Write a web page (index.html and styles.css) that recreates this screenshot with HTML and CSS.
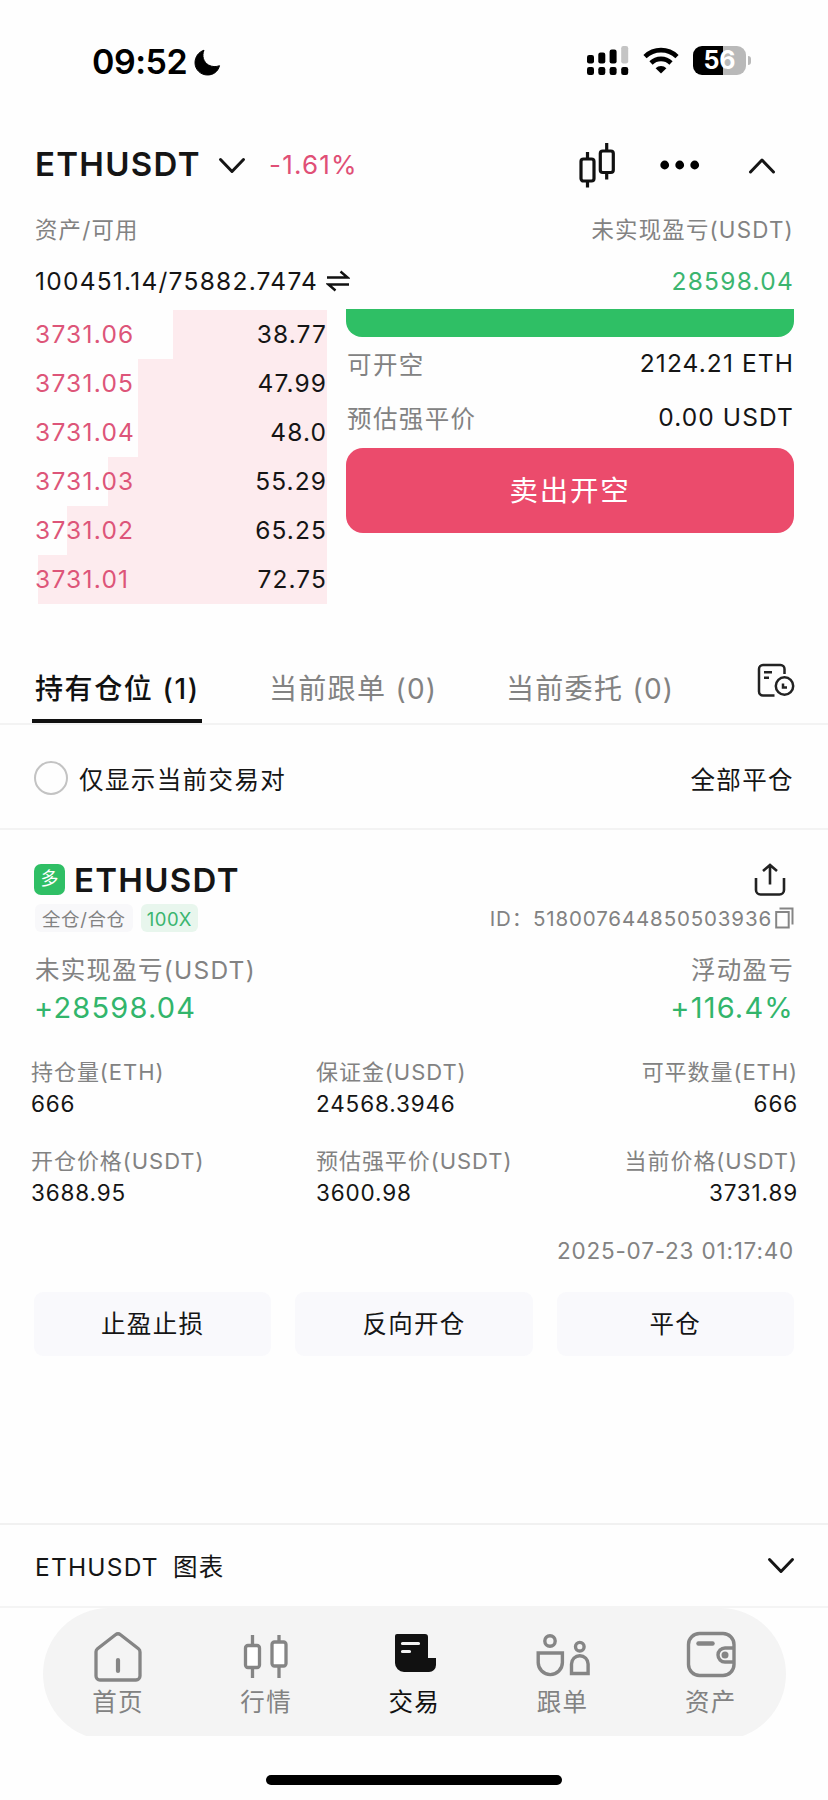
FILE: index.html
```html
<!DOCTYPE html>
<html lang="zh-CN">
<head>
<meta charset="utf-8">
<title>ETHUSDT</title>
<link rel="stylesheet" href="styles.css">
</head>
<body>
<div class="phone">
  <div class="status">
    <span class="clock">09:52</span>
    <svg class="moon" width="27" height="27" viewBox="0 0 27 27"><path d="M10 1.2C7.5 7 9.5 13 14.5 16c3.600 2 7.600 2 11 .7C24 22.500 19.500 26 13.500 26 6.500 26 1 20.500 1 13.800 1 8 4.500 3 10 1.200z" fill="#000" stroke="#000" stroke-linejoin="round"/></svg>
    <span class="grow"></span>
    <svg class="signal" width="42" height="30" viewBox="0 0 42 30"><g fill="#000"><rect x="0" y="9" width="7" height="8.500" rx="2.200"/><rect x="11.300" y="6.500" width="7" height="11" rx="2.200"/><rect x="22.600" y="3.500" width="7" height="14" rx="2.200"/><rect x="0" y="21" width="7" height="8" rx="2.200"/><rect x="11.300" y="21" width="7" height="8" rx="2.200"/><rect x="22.600" y="21" width="7" height="8" rx="2.200"/><rect x="34.200" y="21" width="7" height="8" rx="2.200"/></g><rect x="34.200" y="0" width="7" height="17.500" rx="2.200" fill="#c4c4c4"/></svg>
    <svg class="wifi" width="36" height="27" viewBox="0 0 36 27"><g fill="none" stroke="#000" stroke-width="4.600"><path d="M2 9.600a23 23 0 0 1 32 0"/><path d="M8 16a14.300 14.300 0 0 1 20 0"/></g><path d="M18 26.500l-5.400-5.300a7.600 7.600 0 0 1 10.800 0z"/></svg>
    <div class="battery"><span>56</span></div>
    <i class="nub"></i>
  </div>

  <div class="header">
    <span class="pair">ETHUSDT</span>
    <svg class="caret" width="28" height="18" viewBox="0 0 28 18"><path d="M2.500 2.500L14 14.500 25.500 2.500" class="line-b"/></svg>
    <span class="change">-1.61%</span>
    <span class="grow"></span>
    <svg class="candles" width="36" height="46" viewBox="0 0 36 46"><g fill="none" stroke="#111" stroke-width="3.200"><rect x="2" y="17" width="13" height="22" rx="2.500"/><rect x="21.300" y="9" width="13" height="21.500" rx="2.500"/><path d="M8.500 10v7M8.500 39v6.500M27.700 1v8M27.700 30.500v7"/></g></svg>
    <svg class="dots" width="40" height="10" viewBox="0 0 40 10"><circle cx="4.700" cy="5" r="4.400"/><circle cx="19.700" cy="5" r="4.400"/><circle cx="34.700" cy="5" r="4.400"/></svg>
    <svg class="up" width="28" height="18" viewBox="0 0 28 18"><path d="M2.500 15L14 3 25.500 15" class="line-b"/></svg>
  </div>

  <div class="row labels"><span>资产/可用</span><span>未实现盈亏(USDT)</span></div>
  <div class="row balances">
    <span class="assets">100451.14/75882.7474</span>
    <svg class="swap" width="24" height="22" viewBox="0 0 24 22"><path d="M1 7.500h20.500L14.500 1.500M23 14.500H2.500l7 6" fill="none" stroke="#111" stroke-width="2.400"/></svg>
    <span class="grow"></span>
    <span class="green">28598.04</span>
  </div>

  <div class="trade">
    <div class="book">
      <div class="level"><i style="width:154.500px"></i><b>3731.06</b><span>38.77</span></div>
      <div class="level"><i style="width:189.500px"></i><b>3731.05</b><span>47.99</span></div>
      <div class="level"><i style="width:189.500px"></i><b>3731.04</b><span>48.0</span></div>
      <div class="level"><i style="width:219.500px"></i><b>3731.03</b><span>55.29</span></div>
      <div class="level"><i style="width:260.500px"></i><b>3731.02</b><span>65.25</span></div>
      <div class="level"><i style="width:289.500px"></i><b>3731.01</b><span>72.75</span></div>
    </div>
    <div class="order">
      <div class="buy"></div>
      <div class="info"><span>可开空</span><b>2124.21 ETH</b></div>
      <div class="info"><span>预估强平价</span><b>0.00 USDT</b></div>
      <div class="sell">卖出开空</div>
    </div>
  </div>

  <div class="tabs">
    <span class="tab active">持有仓位 (1)</span>
    <span class="tab second">当前跟单 (0)</span>
    <span class="tab third">当前委托 (0)</span>
    <span class="grow"></span>
    <svg class="history" width="38" height="36" viewBox="0 0 38 36"><g fill="none" stroke="#222" stroke-width="2.500"><path d="M17.500 32.500H6a4 4 0 0 1-4-4V6a4 4 0 0 1 4-4h17.500a4 4 0 0 1 4 4v5"/><circle cx="27.500" cy="23" r="8.700"/><path d="M7 9.200h8M7 14.800h5M26 20.500v4h4"/></g></svg>
  </div>

  <div class="filter"><i class="radio"></i><span class="only">仅显示当前交易对</span><span class="grow"></span><span class="closeall">全部平仓</span></div>

  <div class="card">
    <div class="card-head">
      <span class="side">多</span><span class="name">ETHUSDT</span><span class="grow"></span>
      <svg class="share" width="32" height="34" viewBox="0 0 32 34"><path d="M2 15v12a4.500 4.500 0 0 0 4.500 4.500h19A4.500 4.500 0 0 0 30 27V15M16 21.500V2.500M9 8l7-6 7 6" fill="none" stroke="#222" stroke-width="2.600"/></svg>
    </div>
    <div class="meta">
      <span class="tag">全仓/合仓</span><span class="tag lever">100X</span><span class="grow"></span>
      <span class="id">ID：518007644850503936</span>
      <svg class="copy" width="19" height="22" viewBox="0 0 19 22"><g fill="none" stroke="#858585" stroke-width="2"><rect x="1.200" y="5" width="12.500" height="15.500"/><path d="M4.500 1.500h13v16"/></g></svg>
    </div>
    <div class="pnl-label"><span>未实现盈亏(USDT)</span><span>浮动盈亏</span></div>
    <div class="pnl"><span>+28598.04</span><span>+116.4%</span></div>
    <div class="stats">
      <div><span>持仓量(ETH)</span><b>666</b></div>
      <div><span>保证金(USDT)</span><b>24568.3946</b></div>
      <div><span>可平数量(ETH)</span><b>666</b></div>
      <div><span>开仓价格(USDT)</span><b>3688.95</b></div>
      <div><span>预估强平价(USDT)</span><b>3600.98</b></div>
      <div><span>当前价格(USDT)</span><b>3731.89</b></div>
    </div>
    <div class="date">2025-07-23 01:17:40</div>
    <div class="actions"><span>止盈止损</span><span>反向开仓</span><span>平仓</span></div>
  </div>

  <div class="chart"><span class="chart-name">ETHUSDT</span><span>图表</span><span class="grow"></span>
    <svg class="fold" width="28" height="18" viewBox="0 0 28 18"><path d="M2.500 2.500L14 14.500 25.500 2.500" class="line-b"/></svg>
  </div>

  <div class="dock"><div class="nav">
    <div class="item"><svg width="50" height="52" viewBox="0 0 50 52"><path d="M22.500 3.800a4 4 0 0 1 5 0l18 14a4 4 0 0 1 1.500 3.200v24a4 4 0 0 1-4 4H7a4 4 0 0 1-4-4V21a4 4 0 0 1 1.500-3.200z" fill="none" stroke="#858585" stroke-width="3.300"/><path d="M25 29v11" stroke="#858585" stroke-width="4.200" stroke-linecap="round"/></svg><span>首页</span></div>
    <div class="item"><svg width="50" height="52" viewBox="0 0 50 52"><g fill="#fff" stroke="#858585" stroke-width="3.300"><rect x="4.500" y="14.500" width="14" height="22" rx="2.500"/><rect x="31" y="11" width="14" height="24" rx="2.500"/><path d="M11.500 4v10M11.500 37v10M38 4v7M38 35v12"/></g></svg><span>行情</span></div>
    <div class="item on"><svg width="50" height="52" viewBox="0 0 50 52"><path d="M8 3h28a3 3 0 0 1 3 3v21h8v7a7 7 0 0 1-7 7H15a9 9 0 0 1-9-9V5a2 2 0 0 1 2-2z" fill="#111"/><path d="M13.500 12.500h16M13.500 20.500h7" stroke="#f4f4f4" stroke-width="3.200" stroke-linecap="round"/></svg><span>交易</span></div>
    <div class="item"><svg width="56" height="52" viewBox="0 0 56 52"><g fill="none" stroke="#858585" stroke-width="3.400"><circle cx="15" cy="10" r="5.200"/><path d="M3.200 22h24.200v9.500a12.100 12.100 0 0 1-24.200 0zM36.500 42.500V33a8.300 8.300 0 0 1 16.600 0v9.500z"/><circle cx="44.800" cy="15.700" r="4.300"/></g></svg><span>跟单</span></div>
    <div class="item"><svg width="50" height="52" viewBox="0 0 50 52"><g fill="none" stroke="#858585" stroke-width="3.400"><rect x="2.500" y="2.500" width="45.500" height="42" rx="11"/><path d="M48 17h-9a7 7 0 0 0 0 14h9"/></g><path d="M12.500 12.500h14" stroke="#858585" stroke-width="4.500" stroke-linecap="round"/><circle cx="39" cy="24" r="3.500" fill="#858585"/></svg><span>资产</span></div>
  </div></div>
  <div class="home-bar"></div>
</div>
</body>
</html>
```
FILE: styles.css
```css
* { box-sizing: border-box; }
body { margin: 0; background: #fefefe; }
.phone {
  width: 828px; height: 1800px; overflow: hidden; color: #151515;
  display: flex; flex-direction: column;
  font-family: Inter, "Noto Sans CJK SC", sans-serif; font-size: 24.500px; font-weight: 370; line-height: 30px; white-space: nowrap;
}
.phone > * { flex-shrink: 0; }
.grow { flex: 1; }
b { font-weight: 370; }
svg { display: block; flex-shrink: 0; }
.line-b { fill: none; stroke: #151515; stroke-width: 3; stroke-linecap: round; stroke-linejoin: round; }

.status { height: 124px; display: flex; align-items: center; padding: 0 77px 0 92px; color: #000; }
.clock { font-size: 34px; font-weight: 560; width: 102px; letter-spacing: -0.5px; }
.signal { margin: -3px 14px 0 0; }
.wifi { margin: -4px 14px 0 0; }
.battery { width: 53px; height: 29px; border-radius: 9px; background: linear-gradient(90deg, #000 57%, #b9b9b9 57%); color: #fff; font-size: 25px; font-weight: 650; line-height: 29px; text-align: center; margin-top: -3px; }
.nub { width: 3px; height: 9px; margin: -3px 0 0 2px; border-radius: 0 4px 4px 0; background: #b9b9b9; }

.header { height: 80px; display: flex; align-items: center; padding: 0 52px 0 35px; }
.pair { font-size: 33px; font-weight: 560; width: 183px; letter-spacing: 1.300px; }
.caret { margin-top: 3px; }
.change { margin: 1px 0 0 23px; font-size: 26px; letter-spacing: 1.200px; color: #e04f76; }
.dots { margin-left: 45px; margin-top: 2px; }
.candles { margin-top: 1px; }
.up { margin: 4px 0 0 48px; }

.row { display: flex; align-items: center; justify-content: space-between; padding: 0 34px; }
.labels { height: 50px; color: #828282; font-size: 22.400px; letter-spacing: 1.200px; padding-top: 1px; padding-left: 35px; }
.balances { height: 54px; letter-spacing: 1.250px; padding-left: 35px; }
.swap { margin-left: 8px; }
.green { color: #3bb56f; letter-spacing: 1.250px; }

.trade { height: 346px; display: flex; gap: 19px; padding: 1px 34px 0 35px; }
.book { width: 292px; padding-top: 1px; }
.level { position: relative; height: 49px; padding-bottom: 2px; display: flex; align-items: center; justify-content: space-between; letter-spacing: 1.250px; }
.level i { position: absolute; right: 0; top: 0; height: 49px; background: #fdebee; }
.level b, .level span { position: relative; }
.level span { letter-spacing: 1.100px; }
.level b { color: #dd5579; }
.order { flex: 1; display: flex; flex-direction: column; }
.buy { height: 28px; border-radius: 0 0 16px 16px; background: #2fbf65; }
.info { height: 54px; display: flex; align-items: center; justify-content: space-between; letter-spacing: 1.100px; }
.info b { padding-bottom: 3px; }
.info span { color: #828282; letter-spacing: 1.400px; padding: 1px 0 0 1px; }
.sell { height: 85px; margin-top: 3px; border-radius: 17px; background: #eb4b6c; color: #fff; font-size: 28.500px; letter-spacing: 1.700px; display: flex; align-items: center; justify-content: center; }

.tabs { height: 71px; border-bottom: 2px solid #f3f3f3; display: flex; align-items: center; padding: 0 33px 0 32px; color: #828282; font-size: 28px; letter-spacing: 1.300px; }
.tab { height: 69px; line-height: 71px; }
.active { width: 170px; padding-left: 3px; color: #111; font-weight: 500; letter-spacing: 1.600px; border-bottom: 4px solid #111; }
.second { width: 237px; margin-left: 67px; }
.history { margin: -15px 0 0; }

.filter { height: 105px; border-bottom: 2px solid #f3f3f3; display: flex; align-items: center; padding: 3px 34px 0; letter-spacing: 1.400px; }
.radio { width: 34px; height: 34px; border: 2.500px solid #c3c3c3; border-radius: 50%; }
.only { margin-left: 11px; padding-top: 3px; }
.closeall { padding-top: 3px; }

.card { height: 693px; padding: 30px 34px 0; }
.card-head { height: 40px; display: flex; align-items: center; }
.side { width: 31px; height: 31px; margin-top: -1px; border-radius: 7px; background: #2fbf65; color: #fff; font-size: 18px; text-align: center; }
.name { margin-left: 9px; font-size: 33px; font-weight: 560; letter-spacing: 1.300px; }
.share { margin-right: 8px; }
.meta { height: 36px; display: flex; align-items: center; color: #828282; }
.tag { height: 28px; padding: 0 7px; border-radius: 6px; background: #f8f8fa; font-size: 18.500px; line-height: 30px; letter-spacing: 0.600px; margin-left: 1px; }
.lever { color: #3bb56f; background: #e8f6ed; margin-left: 8px; padding: 0 6px; }
.id { font-size: 20.500px; letter-spacing: 0.850px; padding-top: 2px; }
.copy { margin-left: 3px; }
.pnl-label { height: 36px; margin-top: 16px; display: flex; align-items: center; justify-content: space-between; color: #828282; letter-spacing: 1.250px; padding-left: 1px; }
.pnl { height: 40px; display: flex; align-items: center; justify-content: space-between; color: #32b56b; font-size: 29px; letter-spacing: 1.200px; }
.stats { margin: 28px -4px 0 -3px; display: grid; grid-template-columns: 285px 1fr 1fr; row-gap: 25px; }
.stats div { display: flex; flex-direction: column; line-height: 32px; }
.stats span { color: #828282; font-size: 22px; letter-spacing: 0.950px; }
.stats b { font-size: 22.500px; letter-spacing: 0.850px; }
.stats div:nth-child(3n) { align-items: flex-end; }
.date { height: 32px; line-height: 32px; margin-top: 26px; text-align: right; color: #828282; font-size: 22.500px; letter-spacing: 0.800px; }
.actions { margin-top: 25px; display: grid; grid-template-columns: repeat(3, 1fr); gap: 24px; }
.actions span { height: 64px; line-height: 65px; text-align: center; border-radius: 9px; background: #f9f9fc; letter-spacing: 1.300px; }

.chart { height: 85px; border-top: 2px solid #f1f1f1; border-bottom: 2px solid #f4f4f4; display: flex; align-items: center; padding: 2px 33px 0 35px; letter-spacing: 1.200px; }
.chart-name { width: 138px; }
.fold { margin-top: -2px; }
.dock { height: 128px; padding: 0 42px 0 43px; overflow: hidden; }
.nav { height: 132px; border-radius: 66px; background: #f4f4f4; display: flex; justify-content: center; padding-top: 23px; }
.item { width: 148.500px; margin-left: -0.300px; display: flex; flex-direction: column; align-items: center; color: #828282; letter-spacing: 1.300px; gap: 4px; }
.on { color: #111; }
.home-bar { width: 296px; height: 10px; margin: 39px 0 0 266px; border-radius: 5px; background: #000; }
```
